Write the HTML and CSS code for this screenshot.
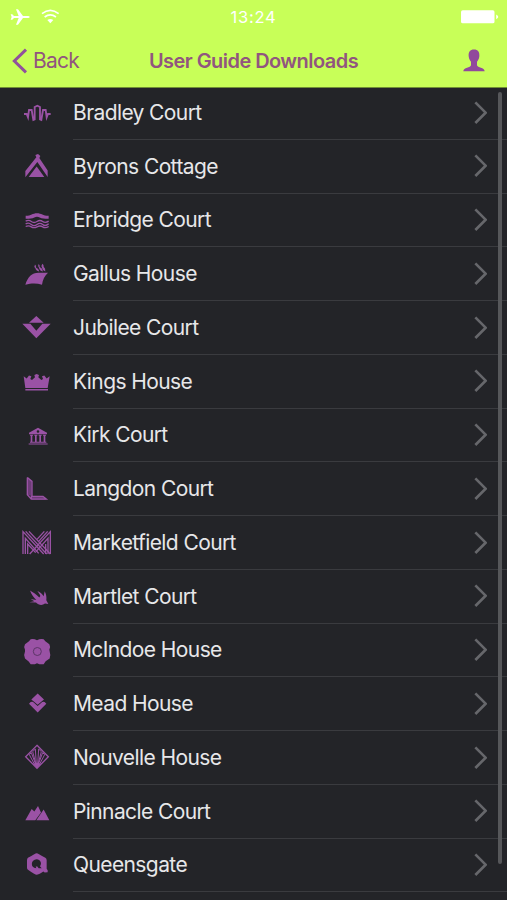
FILE: index.html
```html
<!DOCTYPE html>
<html lang="en">
<head>
<meta charset="utf-8">
<title>User Guide Downloads</title>
<link rel="stylesheet" href="styles.css">
</head>
<body>
<header class="header">
  <div class="status">
    <svg class="signals" viewBox="0 0 190 78"><path d="M32 43h5l5 5h14l-8-20h6l15 20h16q9 3 0 6H69L54 74h-6l8-20H42l-5 5h-5l3-8z" fill="#fff"/><g fill="none" stroke="#fff" stroke-width="5"><path d="M126 41q25-20 50 0"/><path d="M134 51q17-13 34 0"/></g><path d="M142 60q9-6 18 0l-9 10z" fill="#fff"/></svg>
    <span class="time">13:24</span>
    <svg class="battery" viewBox="0 0 120 45"><rect x="3" y="4" width="98" height="38" rx="5" fill="#fff"/><path d="M106 16q12 7 0 14z" fill="#fff"/></svg>
  </div>
  <nav class="nav">
    <a class="back"><svg class="back-icon" viewBox="0 0 48 78"><path d="M42 5L7 39l35 34" fill="none" stroke="#91519c" stroke-width="9"/></svg><span>Back</span></a>
    <h1 class="title">User Guide Downloads</h1>
    <svg class="person" viewBox="0 0 66 68"><path d="M33 1c12 0 17 7 16 20-1 9-4 12-7 17v10c1 8 23 6 23 18H1c0-12 22-10 23-18V38c-3-5-6-8-7-17C16 8 21 1 33 1z" fill="#91499c"/></svg>
  </nav>
</header>
<main class="list">
  <div class="row"><svg class="icon" viewBox="-30 -12 180 161.250"><path d="M42 72h8l4 10 3-22h8l5 30 4-2V51l8-4 8 4v37l4 2 5-30h8l3 22 4-10h8" fill="none" stroke="#9a52a5" stroke-width="5.500"/></svg><div class="cell"><span>Bradley Court</span><svg class="chevron" viewBox="0 0 40 70"><path d="M4 4l31 31L4 66"/></svg></div></div>
  <div class="row"><svg class="icon" viewBox="-30 149.250 180 161.250"><path d="M76 194l8-3 7 6-3 6 25 38v19L82 215l-36 46v-19l33-41z"/><path d="M80 229l23 31H56z"/></svg><div class="cell"><span>Byrons Cottage</span><svg class="chevron" viewBox="0 0 40 70"><path d="M4 4l31 31L4 66"/></svg></div></div>
  <div class="row"><svg class="icon" viewBox="-30 310.500 180 161.250"><path d="M47 376c17 0 20-8 34-8s17 8 35 8v9c-14 0-20-1-27-4q-8-4-16 0c-7 3-13 4-26 4z"/><g fill="none" stroke="#9a52a5" stroke-width="4"><path d="M47 392q9-5 17 1t17 0 17 0 18-1"/><path d="M47 400q9-5 17 2t17 0 17 0 18-2"/><path d="M47 408q9-4 17 1t17 0 17 0 18-1"/></g></svg><div class="cell"><span>Erbridge Court</span><svg class="chevron" viewBox="0 0 40 70"><path d="M4 4l31 31L4 66"/></svg></div></div>
  <div class="row"><svg class="icon" viewBox="-30 -8.250 180 161.250"><path d="M46 105c7-23 20-36 39-36h29c-10 9-16 21-18 36-16-5-31-5-50 0z"/><path d="M75 44q4 3 3 9 8 3 10 12-11-1-12-10-5-4-1-11zm11-1q4 3 3 9 8 3 10 13-11-2-12-11-5-4-1-11zm11-1q5 3 4 9 6 5 5 14-9-3-10-11-4-5 1-12z"/></svg><div class="cell"><span>Gallus House</span><svg class="chevron" viewBox="0 0 40 70"><path d="M4 4l31 31L4 66"/></svg></div></div>
  <div class="row"><svg class="icon" viewBox="-30 153 180 161.250"><path d="M79 198l22 20H57zM37 221h24l18 21 18-21h25l-43 44z"/></svg><div class="cell"><span>Jubilee Court</span><svg class="chevron" viewBox="0 0 40 70"><path d="M4 4l31 31L4 66"/></svg></div></div>
  <div class="row"><svg class="icon" viewBox="-30 314.250 180 161.250"><path d="M46 413l-5-35 9 7 7-9 7 2-3 8 5 3 9-8-2-7 7-3 7 3-2 7 9 8 5-3-3-8 7-2 7 9 9-7-6 35zM46 416h68v5H46z"/></svg><div class="cell"><span>Kings House</span><svg class="chevron" viewBox="0 0 40 70"><path d="M4 4l31 31L4 66"/></svg></div></div>
  <div class="row"><svg class="icon" viewBox="-30 -4.500 180 161.250"><path fill-rule="evenodd" d="M84 52l27 15v4H57v-4zM80 63a4 4 0 1 0 8 0 4 4 0 1 0-8 0"/><path d="M60 73h9v3h-2v19h-5V76h-2zm13 0h9v3h-2v19h-5V76h-2zm13 0h9v3h-2v19h-5V76h-2zm13 0h9v3h-2v19h-5V76h-2zM60 94h49v3H60zM56 99h57v3H56z"/></svg><div class="cell"><span>Kirk Court</span><svg class="chevron" viewBox="0 0 40 70"><path d="M4 4l31 31L4 66"/></svg></div></div>
  <div class="row"><svg class="icon" viewBox="-30 156.750 180 161.250"><path d="M52 202l13 12v45l-11-3zM65 269v-9h32l13 9z" fill="#6d3c78"/><g fill="none" stroke="#9a52a5" stroke-width="4"><path d="M52 203v52l11 12M52 203l14 12v44M64 260h35l10 8H64z"/></g></svg><div class="cell"><span>Langdon Court</span><svg class="chevron" viewBox="0 0 40 70"><path d="M4 4l31 31L4 66"/></svg></div></div>
  <div class="row"><svg class="icon" viewBox="-30 318 180 161.250"><g fill="none" stroke="#9a52a5" stroke-width="4"><path d="M39 432v-67l62 67M46 432v-47l40 45M53 432v-30l24 26M47 364l63 68M57 364l64 68"/><path d="M121 432v-67l-62 67M114 432v-47l-36 40M107 432v-30M113 364L86 394M103 364L81 388"/></g></svg><div class="cell"><span>Marketfield Court</span><svg class="chevron" viewBox="0 0 40 70"><path d="M4 4l31 31L4 66"/></svg></div></div>
  <div class="row"><svg class="icon" viewBox="-30 -.750 180 161.250"><path d="M60 61c9 5 20 12 28 21l3-5c-2-6-5-10-9-15 9 4 15 9 19 16l3-15c5 10 6 17 5 27l6 11-10-1c-9 7-20 4-27-3l-20-1 15-3-11-7 17 3c-8-7-15-16-19-28z"/></svg><div class="cell"><span>Martlet Court</span><svg class="chevron" viewBox="0 0 40 70"><path d="M4 4l31 31L4 66"/></svg></div></div>
  <div class="row"><svg class="icon" viewBox="-30 160.500 180 161.250"><path d="M62 206q10-2 19 3 9-5 20-3l5 6 12 9q5 9 0 17l1 5q4 11 0 21l-12 8-6 9q-10 2-20-3-9 5-19 3l-6-8-11-9q-5-11 0-21v-5q-5-9 0-17l12-9z"/><circle cx="82" cy="243" r="12" fill="none" stroke="#5c3567" stroke-width="3"/></svg><div class="cell"><span>McIndoe House</span><svg class="chevron" viewBox="0 0 40 70"><path d="M4 4l31 31L4 66"/></svg></div></div>
  <div class="row"><svg class="icon" viewBox="-30 321.750 180 161.250"><path d="M83 371l19 18-19 16-19-16zM57 402l5-5q6-3 10 2l11 10 11-10q4-5 10-2l5 5-26 26z"/></svg><div class="cell"><span>Mead House</span><svg class="chevron" viewBox="0 0 40 70"><path d="M4 4l31 31L4 66"/></svg></div></div>
  <div class="row"><svg class="icon" viewBox="-30 3 180 161.250"><g fill="none" stroke="#9a52a5" stroke-width="4"><path d="M81 46l34 34-34 35-34-35z"/><path d="M74 104L58 74l6-6 13 35M78 103L68 65l8-8 3 46M83 103l3-46 8 8-10 38M85 103l13-35 6 6-16 30" stroke-width="3"/></g><path d="M70 101q11-5 22 0l-11 13z"/></svg><div class="cell"><span>Nouvelle House</span><svg class="chevron" viewBox="0 0 40 70"><path d="M4 4l31 31L4 66"/></svg></div></div>
  <div class="row"><svg class="icon" viewBox="-30 164.250 180 161.250"><path d="M46 270l19-34 8 8 11-17 9 20-17 23zM79 270l22-32 17 32z"/></svg><div class="cell"><span>Pinnacle Court</span><svg class="chevron" viewBox="0 0 40 70"><path d="M4 4l31 31L4 66"/></svg></div></div>
  <div class="row"><svg class="icon" viewBox="-30 325.500 180 161.250"><path fill-rule="evenodd" d="M80 368q4 0 26 14 4 2 4 7v26l3 4v6l-9 1-4-3q-15 10-20 10t-26-15q-3-2-3-6v-23q0-5 3-7 22-14 26-14zM80 386c-18 0-20 27-1 27l-2-5h5l4 5h9l-5-6c7-9 1-21-10-21z"/></svg><div class="cell"><span>Queensgate</span><svg class="chevron" viewBox="0 0 40 70"><path d="M4 4l31 31L4 66"/></svg></div></div>
</main>
<div class="scrollbar"></div>
</body>
</html>
```
FILE: styles.css
```css
* { box-sizing: border-box; }
html, body { height: 100%; }
body { margin: 0; overflow: hidden; background: #232428; font-family: Inter, "Liberation Sans", sans-serif; }
svg { display: block; }
.header { position: relative; z-index: 1; height: 88px; background: #c8ff58; border-bottom: 1px solid #709034; }
.status { height: 34px; display: grid; grid-template-columns: 1fr auto 1fr; align-items: center; padding-right: 6px; padding-left: 6px; }
.signals { width: 63.300px; height: 26px; margin: -8px 0 0 -6px; }
.time { font-size: 16.500px; letter-spacing: .8px; color: #fff; }
.battery { width: 41px; height: 15.400px; justify-self: end; }
.nav { height: 53px; display: grid; grid-template-columns: 120px 1fr 120px; align-items: center; color: #91557f; }
.back { display: flex; align-items: center; gap: 5px; padding-left: 12px; font-size: 21px; letter-spacing: -.8px; }
.back-icon { width: 16px; height: 26px; }
.title { margin: 0; text-align: center; font-size: 20px; font-weight: 600; letter-spacing: -.55px; white-space: nowrap; }
.person { width: 22px; height: 23px; justify-self: end; margin-right: 22px; }
.list { margin-top: -2px; }
.row { height: 53.750px; display: flex; }
.icon { width: 60px; height: 53.750px; flex: none; fill: #9a52a5; }
.cell { flex: 1; margin-left: 13px; padding-right: 20px; display: flex; align-items: center; justify-content: space-between; border-bottom: 1px solid #3a3b3f; color: #e7e7e9; font-size: 21px; letter-spacing: -.6px; }
.chevron { width: 13.300px; height: 23.300px; fill: none; stroke: #66676b; stroke-width: 8; }
.scrollbar { position: absolute; right: 5px; top: 92px; width: 4px; height: 772px; border-radius: 2px; background: #56575a; }
```
